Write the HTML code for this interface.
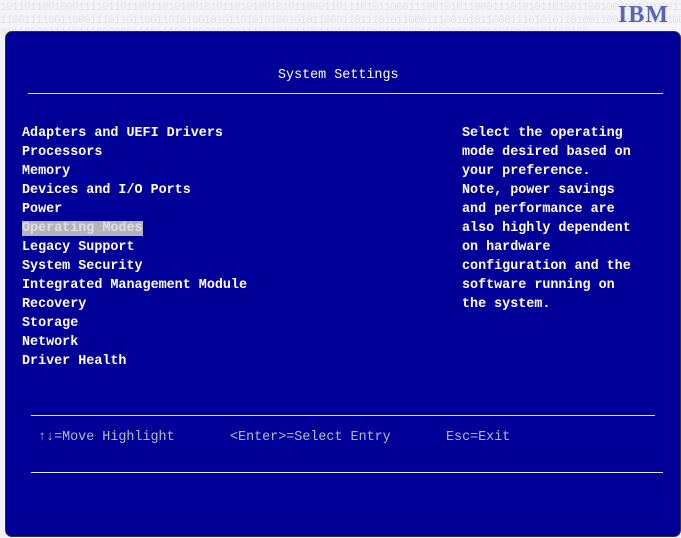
<!DOCTYPE html>
<html><head><style>
body{margin:0;width:681px;height:538px;background:#f4f4f6;position:relative;overflow:hidden;font-family:"Liberation Mono",monospace;}
.bin{position:absolute;left:0;font-size:11px;color:#e2e2ea;white-space:nowrap;letter-spacing:-0.6px}
.ibm{position:absolute;right:12px;top:2px;font:bold 24px "Liberation Serif",serif;color:#5a64b4;letter-spacing:1px}
.panel{position:absolute;left:5px;top:31px;width:674px;height:504px;background:#000099;border-radius:7px;border:1px solid #333}
.t{position:absolute;color:#fff;font-size:13.4px;white-space:pre;line-height:19px;font-weight:bold}
.hl{background:#b4b4b4;color:#dde}
.line{position:absolute;height:1px;background:#e0e0f0}
.f{color:#b8b8c8;font-weight:normal}
</style></head><body>
<div class="bin" style="top:2px">10110110010001111011011001101010010101101010010101100011011101011000111001010110001110101011010011001001101010001110</div>
<div class="bin" style="top:15px">11001111001100011101101100110101001010110101010010101100011011101011000111001010110001110101011010011001001101010001</div>
<div class="bin" style="top:27px">01110000111101110000001110111001000000001110010101100110101010101110001100000110011010100101110100</div>
<div class="ibm">IBM</div>
<div class="panel"></div>
<div class="t" style="left:278px;top:66px;font-weight:normal">System Settings</div>
<div class="line" style="left:28px;top:93px;width:635px"></div>
<div class="t" style="left:22px;top:124px">Adapters and UEFI Drivers
Processors
Memory
Devices and I/O Ports
Power
<span class="hl">Operating Modes</span>
Legacy Support
System Security
Integrated Management Module
Recovery
Storage
Network
Driver Health</div>
<div class="t" style="left:462px;top:124px">Select the operating
mode desired based on
your preference.
Note, power savings
and performance are
also highly dependent
on hardware
configuration and the
software running on
the system.</div>
<div class="line" style="left:31px;top:415px;width:624px"></div>
<div class="t f" style="left:38px;top:428px">↑↓=Move Highlight</div>
<div class="t f" style="left:230px;top:428px">&lt;Enter&gt;=Select Entry</div>
<div class="t f" style="left:446px;top:428px">Esc=Exit</div>
<div class="line" style="left:31px;top:472px;width:632px"></div>
</body></html>
